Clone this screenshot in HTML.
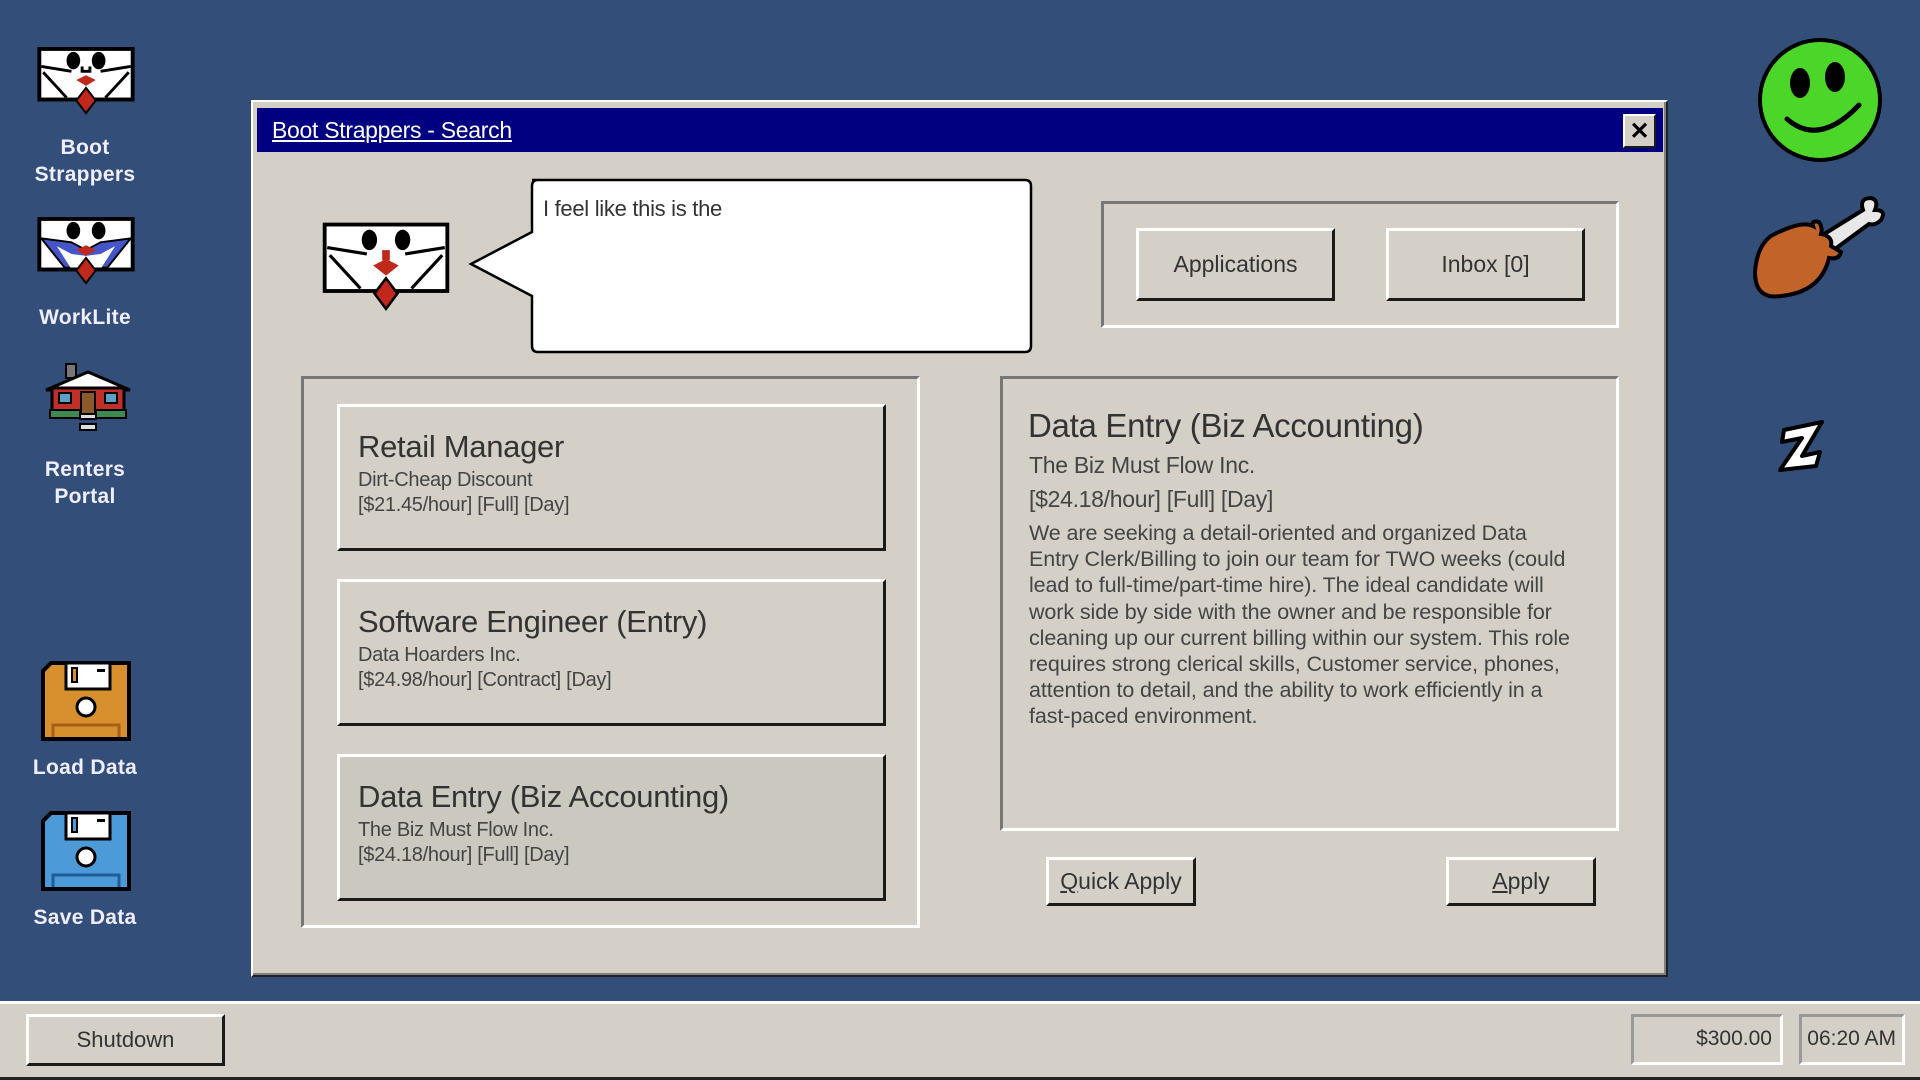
<!DOCTYPE html>
<html><head><meta charset="utf-8">
<style>
*{margin:0;padding:0;box-sizing:border-box}
body{width:1920px;height:1080px;background:#344e7a;position:relative;overflow:hidden;font-family:"Liberation Sans",sans-serif;color:#333}
.abs{position:absolute}
.lbl{position:absolute;color:#eef;font-size:21px;font-weight:bold;text-align:center;width:170px;line-height:27px;letter-spacing:.3px}
.win{left:251px;top:100px;width:1417px;height:877px;background:#d4d0c8;border:2px solid;border-color:#fff #222 #222 #fff;box-shadow:inset -2px -2px 0 #808080}
.raised{position:absolute;background:#d4d0c8;border:3px solid;border-color:#fff #1a1a1a #1a1a1a #fff}
.sunk{position:absolute;border:3px solid;border-color:#777 #fff #fff #777}
.btn{display:flex;align-items:center;justify-content:center;font-size:23px;color:#333}
.card .t{position:absolute;left:18px;top:22px;font-size:31px;white-space:nowrap;letter-spacing:-.3px}
.card .s{position:absolute;left:18px;top:61px;font-size:20px;line-height:25px;white-space:nowrap;color:#444;letter-spacing:-.3px}
</style></head><body>

<svg class="abs" style="left:37px;top:47px" width="98" height="70" viewBox="0 0 100 72">
<rect x="2" y="2" width="96" height="52" fill="#fff" stroke="#000" stroke-width="4"/>
<path d="M4 20 L35 25 M65 25 L96 20 M6 26 L30 52 M94 26 L70 52" stroke="#000" stroke-width="3" fill="none"/>
<ellipse cx="37" cy="14" rx="7" ry="9"/><ellipse cx="63" cy="14" rx="7" ry="9"/>
<path d="M46 20 v5 h8 v-5" stroke="#000" stroke-width="3" fill="none"/>
<path d="M40 34 L50 29 L60 34 L50 40Z" fill="#c0281c"/><path d="M50 42 L60 55 L50 68 L40 55Z" fill="#c0281c" stroke="#000" stroke-width="2"/></svg>
<div class="lbl" style="left:0;top:134px">Boot<br>Strappers</div>

<svg class="abs" style="left:37px;top:217px" width="98" height="70" viewBox="0 0 100 72">
<rect x="2" y="2" width="96" height="52" fill="#fff" stroke="#000" stroke-width="4"/>
<path d="M4 22 L35 26 L50 34 L65 26 L96 22 L72 52 L28 52Z" fill="#4656c8" stroke="#000" stroke-width="2"/>
<path d="M20 30 L34 52 L66 52 L80 30 L65 38 L50 40 L35 38Z" fill="#fff"/>
<ellipse cx="37" cy="14" rx="7" ry="9"/><ellipse cx="63" cy="14" rx="7" ry="9"/>
<path d="M40 34 L50 29 L60 34 L50 40Z" fill="#c0281c"/><path d="M50 42 L60 55 L50 68 L40 55Z" fill="#c0281c" stroke="#000" stroke-width="2"/></svg>
<div class="lbl" style="left:0;top:304px">WorkLite</div>

<svg class="abs" style="left:44px;top:362px" width="88" height="82" viewBox="0 0 88 82">
<rect x="22" y="2" width="10" height="14" fill="#777" stroke="#000" stroke-width="2"/>
<path d="M2 28 L44 10 L86 28 Z" fill="#fff" stroke="#000" stroke-width="3"/>
<rect x="8" y="26" width="72" height="24" fill="#c0302a" stroke="#000" stroke-width="3"/>
<rect x="15" y="31" width="12" height="10" fill="#5aa0c8" stroke="#000" stroke-width="2"/><rect x="61" y="31" width="12" height="10" fill="#5aa0c8" stroke="#000" stroke-width="2"/>
<rect x="37" y="30" width="14" height="22" fill="#8b5a2b" stroke="#000" stroke-width="2"/>
<rect x="6" y="48" width="30" height="8" fill="#3f8a50" stroke="#000" stroke-width="2"/><rect x="52" y="48" width="30" height="8" fill="#3f8a50" stroke="#000" stroke-width="2"/>
<rect x="36" y="52" width="16" height="5" fill="#ddd" stroke="#000" stroke-width="2"/><rect x="36" y="62" width="16" height="6" fill="#ddd" stroke="#000" stroke-width="2"/></svg>
<div class="lbl" style="left:0;top:456px">Renters<br>Portal</div>

<svg class="abs" style="left:41px;top:661px" width="90" height="80" viewBox="0 0 90 80">
<path d="M10 2 H88 V78 H2 V10Z" fill="#d8902e" stroke="#000" stroke-width="4"/>
<rect x="25" y="2" width="44" height="26" fill="#fff" stroke="#000" stroke-width="3"/><rect x="31" y="7" width="5" height="14" fill="#d8902e" stroke="#000" stroke-width="2"/><rect x="56" y="8" width="8" height="3"/>
<circle cx="45" cy="46" r="9" fill="#fff" stroke="#000" stroke-width="3"/>
<path d="M12 76 V64 H78 V76" fill="none" stroke="#a46018" stroke-width="3"/></svg>
<div class="lbl" style="left:0;top:754px">Load Data</div>

<svg class="abs" style="left:41px;top:811px" width="90" height="80" viewBox="0 0 90 80">
<path d="M10 2 H88 V78 H2 V10Z" fill="#4c9ad8" stroke="#000" stroke-width="4"/>
<rect x="25" y="2" width="44" height="26" fill="#fff" stroke="#000" stroke-width="3"/><rect x="31" y="7" width="5" height="14" fill="#4c9ad8" stroke="#000" stroke-width="2"/><rect x="56" y="8" width="8" height="3"/>
<circle cx="45" cy="46" r="9" fill="#fff" stroke="#000" stroke-width="3"/>
<path d="M12 76 V64 H78 V76" fill="none" stroke="#1e5c9a" stroke-width="3"/></svg>
<div class="lbl" style="left:0;top:904px">Save Data</div>

<svg class="abs" style="left:1757px;top:37px" width="127" height="127" viewBox="0 0 127 127">
<circle cx="63" cy="63" r="60" fill="#4cd62a" stroke="#000" stroke-width="4"/>
<ellipse cx="43" cy="46" rx="10" ry="15"/><ellipse cx="78" cy="40" rx="10" ry="15"/>
<path d="M30 82 Q62 110 102 68" fill="none" stroke="#000" stroke-width="5" stroke-linecap="round"/></svg>
<svg class="abs" style="left:1751px;top:196px" width="136" height="110" viewBox="0 0 136 110">
<path d="M70 40 L112 14 Q108 2 120 2 Q128 4 124 14 Q136 14 130 24 Q124 30 118 28 L80 56Z" fill="#e8e8e8" stroke="#000" stroke-width="4"/>
<path d="M20 40 Q50 24 62 30 Q60 24 68 26 Q72 32 70 38 Q82 40 80 50 L90 56 Q88 64 78 62 Q70 96 30 100 Q4 104 4 76 Q6 50 20 40Z" fill="#c2642a" stroke="#000" stroke-width="4"/></svg>
<svg class="abs" style="left:1778px;top:420px" width="50" height="52" viewBox="0 0 50 52">
<path d="M6 10 L44 2 L24 36 L42 32 L38 46 L2 50 L24 18 L4 22Z" fill="#fff" stroke="#000" stroke-width="4" stroke-linejoin="round"/></svg>

<div class="abs win">
 <div class="abs" style="left:4px;top:6px;width:1406px;height:44px;background:#000080"></div>
 <div class="abs" style="left:19px;top:15px;color:#fff;font-size:23px;text-decoration:underline;letter-spacing:-.3px">Boot Strappers - Search</div>
 <div class="raised btn" style="left:1370px;top:12px;width:33px;height:34px;border-width:2px;font-size:24px;font-weight:bold;color:#000">✕</div>

 <svg class="abs" style="left:68px;top:120px" width="130" height="92" viewBox="0 0 100 72">
 <rect x="2" y="2" width="96" height="52" fill="#fff" stroke="#000" stroke-width="3"/>
 <path d="M4 20 L35 25 M65 25 L96 20 M6 26 L30 52 M94 26 L70 52" stroke="#000" stroke-width="2.5" fill="none"/>
 <ellipse cx="37" cy="14" rx="6" ry="8"/><ellipse cx="63" cy="14" rx="6" ry="8"/>
 <rect x="47" y="22" width="6" height="8" fill="#c0281c"/>
 <path d="M40 34 L50 29 L60 34 L50 42Z" fill="#c0281c"/><path d="M50 44 L59 56 L50 68 L41 56Z" fill="#c0281c" stroke="#000" stroke-width="2"/></svg>

 <svg class="abs" style="left:214px;top:76px" width="566" height="176" viewBox="0 0 566 176">
 <path d="M65 2 H558 Q564 2 564 8 V168 Q564 174 558 174 H71 Q65 174 65 168 V118 L4 86 L65 54 V8 Q65 2 71 2Z" fill="#fff" stroke="#000" stroke-width="2.5"/></svg>
 <div class="abs" style="left:290px;top:94px;font-size:22px;color:#333;letter-spacing:-.3px">I feel like this is the</div>

 <div class="sunk" style="left:848px;top:99px;width:518px;height:127px"></div>
 <div class="raised btn" style="left:883px;top:126px;width:199px;height:73px">Applications</div>
 <div class="raised btn" style="left:1133px;top:126px;width:199px;height:73px">Inbox [0]</div>

 <div class="sunk" style="left:48px;top:274px;width:619px;height:552px"></div>
 <div class="raised card" style="left:84px;top:302px;width:549px;height:147px"><div class="t">Retail Manager</div><div class="s">Dirt-Cheap Discount<br>[$21.45/hour] [Full] [Day]</div></div>
 <div class="raised card" style="left:84px;top:477px;width:549px;height:147px"><div class="t">Software Engineer (Entry)</div><div class="s">Data Hoarders Inc.<br>[$24.98/hour] [Contract] [Day]</div></div>
 <div class="raised card" style="left:84px;top:652px;width:549px;height:147px;background:#cbc8bf"><div class="t">Data Entry (Biz Accounting)</div><div class="s">The Biz Must Flow Inc.<br>[$24.18/hour] [Full] [Day]</div></div>

 <div class="sunk" style="left:747px;top:274px;width:619px;height:455px"></div>
 <div class="abs" style="left:775px;top:305px;font-size:33px;white-space:nowrap;letter-spacing:-.3px">Data Entry (Biz Accounting)</div>
 <div class="abs" style="left:776px;top:350px;font-size:23px;color:#444;letter-spacing:-.3px">The Biz Must Flow Inc.</div>
 <div class="abs" style="left:776px;top:384px;font-size:23px;color:#444;letter-spacing:-.3px">[$24.18/hour] [Full] [Day]</div>
 <div class="abs" style="left:776px;top:418px;font-size:21.5px;line-height:26.2px;color:#444;white-space:nowrap;letter-spacing:-.1px">We are seeking a detail-oriented and organized Data<br>Entry Clerk/Billing to join our team for TWO weeks (could<br>lead to full-time/part-time hire). The ideal candidate will<br>work side by side with the owner and be responsible for<br>cleaning up our current billing within our system. This role<br>requires strong clerical skills, Customer service, phones,<br>attention to detail, and the ability to work efficiently in a<br>fast-paced environment.</div>

 <div class="raised btn" style="left:793px;top:755px;width:150px;height:49px"><span><u>Q</u>uick Apply</span></div>
 <div class="raised btn" style="left:1193px;top:755px;width:150px;height:49px"><span><u>A</u>pply</span></div>
</div>

<div class="abs" style="left:0;top:1001px;width:1920px;height:79px;background:#d4d0c8;border-top:3px solid #fff;border-bottom:3px solid #222"></div>
<div class="raised btn" style="left:26px;top:1014px;width:199px;height:52px;font-size:22px">Shutdown</div>
<div class="sunk" style="left:1631px;top:1014px;width:152px;height:51px;border-color:#999 #fff #fff #999;font-size:21px;text-align:right;padding:10px 8px 0 0">$300.00</div>
<div class="sunk" style="left:1799px;top:1014px;width:106px;height:51px;border-color:#999 #fff #fff #999;font-size:21px;text-align:right;padding:10px 6px 0 0">06:20 AM</div>
</body></html>
